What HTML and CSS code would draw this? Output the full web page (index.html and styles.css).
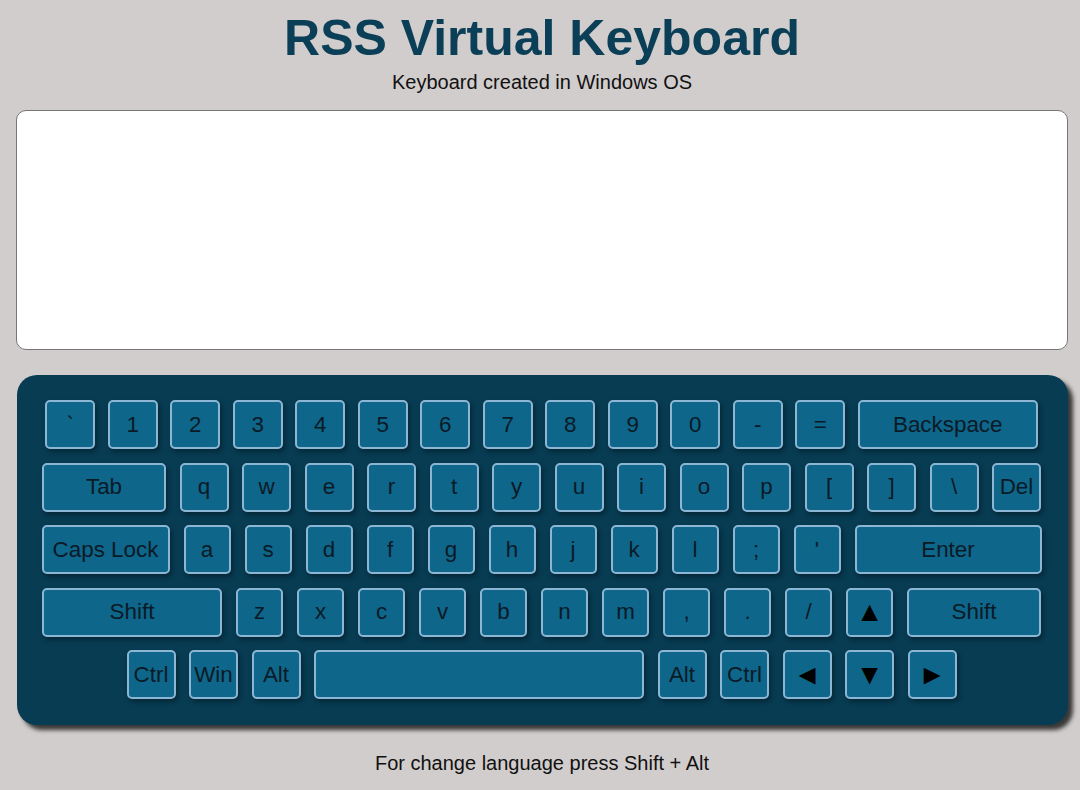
FILE: index.html
```html
<!DOCTYPE html>
<html lang="en">
<head>
<meta charset="utf-8">
<title>RSS Virtual Keyboard</title>
<link rel="stylesheet" href="styles.css">
</head>
<body>
<div class="page">
  <h1 class="title">RSS Virtual Keyboard</h1>
  <p class="subtitle">Keyboard created in Windows OS</p>
  <textarea class="output"></textarea>
  <div class="keyboard">
    <div class="row row-1">
      <div class="key">`</div><div class="key">1</div><div class="key">2</div><div class="key">3</div><div class="key">4</div><div class="key">5</div><div class="key">6</div><div class="key">7</div><div class="key">8</div><div class="key">9</div><div class="key">0</div><div class="key">-</div><div class="key">=</div><div class="key backspace">Backspace</div>
    </div>
    <div class="row row-2">
      <div class="key tab">Tab</div><div class="key">q</div><div class="key">w</div><div class="key">e</div><div class="key">r</div><div class="key">t</div><div class="key">y</div><div class="key">u</div><div class="key">i</div><div class="key">o</div><div class="key">p</div><div class="key">[</div><div class="key">]</div><div class="key">\</div><div class="key">Del</div>
    </div>
    <div class="row row-3">
      <div class="key caps">Caps Lock</div><div class="key">a</div><div class="key">s</div><div class="key">d</div><div class="key">f</div><div class="key">g</div><div class="key">h</div><div class="key">j</div><div class="key">k</div><div class="key">l</div><div class="key">;</div><div class="key">'</div><div class="key enter">Enter</div>
    </div>
    <div class="row row-4">
      <div class="key shift-left">Shift</div><div class="key">z</div><div class="key">x</div><div class="key">c</div><div class="key">v</div><div class="key">b</div><div class="key">n</div><div class="key">m</div><div class="key">,</div><div class="key">.</div><div class="key">/</div><div class="key arrow">&#9650;</div><div class="key shift-right">Shift</div>
    </div>
    <div class="row row-5">
      <div class="key">Ctrl</div><div class="key">Win</div><div class="key">Alt</div><div class="key space"></div><div class="key">Alt</div><div class="key">Ctrl</div><div class="key arrow">&#9668;</div><div class="key arrow">&#9660;</div><div class="key arrow">&#9658;</div>
    </div>
  </div>
  <p class="hint">For change language press Shift + Alt</p>
</div>
</body>
</html>
```

FILE: styles.css
```css
html, body {
  margin: 0;
  padding: 0;
}

body {
  background: #d1cdcc;
  font-family: "Liberation Sans", Arial, sans-serif;
  color: #111;
}

.page {
  width: 1052px;
  margin-left: 16px;
  padding-top: 10px;
}

.title {
  margin: 0;
  font-size: 50px;
  line-height: 56px;
  font-weight: bold;
  text-align: center;
  color: #0b3f57;
}

.subtitle {
  margin: 5px 0 0;
  font-size: 20px;
  line-height: 23px;
  text-align: center;
  color: #111;
}

.output {
  display: block;
  box-sizing: border-box;
  width: 100%;
  height: 240px;
  margin: 16px 0 0;
  padding: 10px;
  border: 1px solid #777;
  border-radius: 10px;
  background: #fff;
  resize: none;
  outline: none;
  font-family: "Liberation Sans", Arial, sans-serif;
  font-size: 20px;
}

.keyboard {
  box-sizing: border-box;
  width: 1051px;
  height: 350px;
  margin: 25px 0 0 1px;
  padding: 25px 0 26px;
  display: flex;
  flex-direction: column;
  gap: 13.5px;
  background: #073c53;
  border-radius: 20px;
  box-shadow: 5px 5px 4px rgba(30, 30, 30, 0.85);
}

.row {
  display: flex;
  justify-content: center;
  height: 49px;
  padding-right: 2px;
}

.row-1 { gap: 12.5px; }
.row-2 { gap: 13.5px; }
.row-3 { gap: 14px; }
.row-4 { gap: 14px; }
.row-5 { gap: 13.5px; }

.key {
  box-sizing: border-box;
  flex: none;
  height: 49px;
  display: flex;
  align-items: center;
  justify-content: center;
  border: 2px solid #8cb6d4;
  border-radius: 5px;
  background: #0e668a;
  color: #0a1a26;
  font-size: 22.4px;
  box-shadow: 2px 3px 5px rgba(0, 0, 0, 0.35);
  white-space: nowrap;
}

.row-1 .key { width: 50px; }
.row-2 .key { width: 49px; }
.row-3 .key { width: 47px; }
.row-4 .key { width: 47px; }
.row-5 .key { width: 49px; }

.row-1 .backspace { width: 180px; }
.row-2 .tab { width: 124px; }
.row-3 .caps { width: 128px; }
.row-3 .enter { width: 187px; }
.row-4 .shift-left { width: 180px; }
.row-4 .shift-right { width: 134px; }
.row-5 .space { width: 330px; }

.row .arrow {
  color: #000;
  font-size: 28px;
}

.hint {
  margin: 27px 0 0;
  font-size: 20px;
  line-height: 23px;
  text-align: center;
  color: #111;
}
```
